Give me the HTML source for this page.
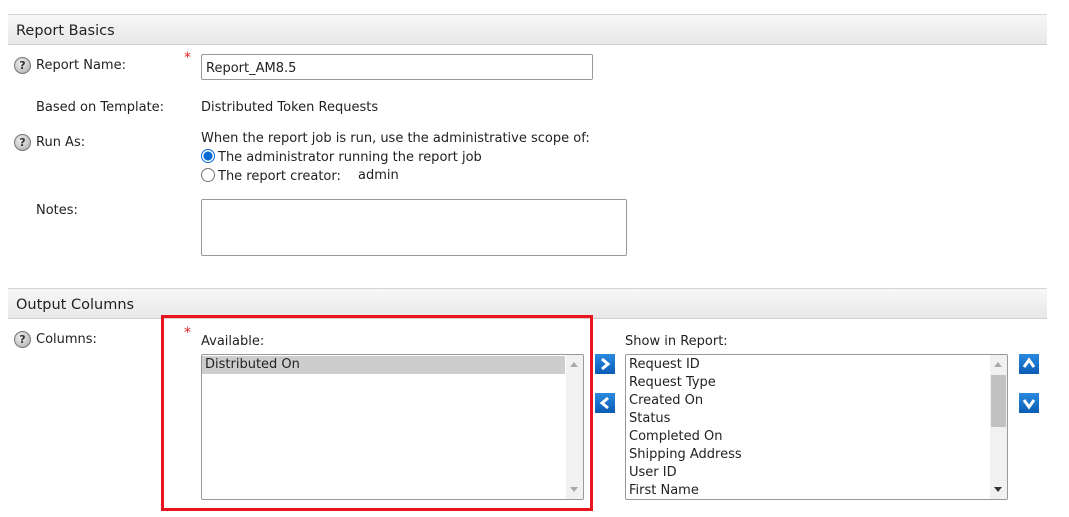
<!DOCTYPE html>
<html><head><style>
*{margin:0;padding:0;box-sizing:border-box}
body{width:1069px;height:517px;background:#fff;font-family:"DejaVu Sans","Liberation Sans",sans-serif;font-size:13px;color:#222;position:relative;overflow:hidden}
.a{position:absolute;white-space:nowrap}
.hdr{position:absolute;left:8px;width:1039px;height:31px;background:linear-gradient(#f7f7f7,#e8e8e8);border-top:1px solid #d4d4d4;border-bottom:1px solid #d0d0d0;font-size:14.5px;padding:8px 0 0 8px;color:#222}
.help{position:absolute;width:17px;height:17px;border-radius:50%;background:radial-gradient(circle at 40% 35%,#f2f2f2,#a8a8a8);border:1px solid #777;font-size:11px;font-weight:bold;text-align:center;line-height:15px;color:#333}
.star{position:absolute;color:#d22;font-size:14px}
.box{position:absolute;border:1px solid #999;background:#fff;border-radius:2px}
.radio{position:absolute;width:14px;height:14px;border-radius:50%;border:1px solid #777;background:#fff}
.btn{position:absolute;width:20px;height:20px;background:linear-gradient(#2a8ae0,#0b5cb5)}
.sb{position:absolute;right:0;top:0;bottom:0;width:17px;background:#f1f1f1}
.li{height:18px;line-height:18px;padding-left:3px;font-size:13px}
.ar{position:absolute;left:4px;width:0;height:0;border-left:4px solid transparent;border-right:4px solid transparent}
</style></head><body>
<div class="hdr" style="top:14px">Report Basics</div>
<div class="help" style="left:14px;top:57px">?</div>
<div class="a" style="left:36px;top:58px">Report Name:</div>
<div class="star" style="left:184px;top:50px">*</div>
<div class="box" style="left:201px;top:54px;width:392px;height:26px;padding:6px 0 0 4px">Report_AM8.5</div>
<div class="a" style="left:36px;top:100px">Based on Template:</div>
<div class="a" style="left:201px;top:100px">Distributed Token Requests</div>
<div class="help" style="left:14px;top:134px">?</div>
<div class="a" style="left:36px;top:135px">Run As:</div>
<div class="a" style="left:201px;top:131px">When the report job is run, use the administrative scope of:</div>
<div class="radio" style="left:201px;top:149px;border-color:#0a6ad6;background:radial-gradient(circle,#0a6ad6 0 4px,#fff 5px)"></div>
<div class="a" style="left:218px;top:150px">The administrator running the report job</div>
<div class="radio" style="left:201px;top:168px"></div>
<div class="a" style="left:218px;top:169px">The report creator:</div>
<div class="a" style="left:358px;top:168px">admin</div>
<div class="a" style="left:36px;top:203px">Notes:</div>
<div class="box" style="left:201px;top:199px;width:426px;height:57px"></div>
<div class="hdr" style="top:288px">Output Columns</div>
<div class="help" style="left:14px;top:331px">?</div>
<div class="a" style="left:36px;top:332px">Columns:</div>
<div class="star" style="left:184px;top:325px">*</div>
<div class="a" style="left:201px;top:334px">Available:</div>
<div class="box" style="left:201px;top:354px;width:383px;height:146px;overflow:hidden"><div class="sb"><div class="ar" style="top:7px;border-bottom:5px solid #aaa"></div><div class="ar" style="bottom:7px;border-top:5px solid #aaa"></div></div><div class="li" style="background:#cdcdcd;margin-right:18px;margin-top:1px">Distributed On</div></div>
<div style="position:absolute;left:161px;top:315px;width:432px;height:196px;border:3px solid #e8141e"></div>
<div class="btn" style="left:595px;top:354px"><svg width="20" height="20"><path d="M7 5 L13 10 L7 15" stroke="#fff" stroke-width="3" fill="none"/></svg></div>
<div class="btn" style="left:595px;top:393px"><svg width="20" height="20"><path d="M13 5 L7 10 L13 15" stroke="#fff" stroke-width="3" fill="none"/></svg></div>
<div class="a" style="left:625px;top:334px">Show in Report:</div>
<div class="box" style="left:625px;top:354px;width:383px;height:146px;overflow:hidden"><div class="sb"><div class="ar" style="top:7px;border-bottom:5px solid #aaa"></div><div style="position:absolute;left:1px;right:1px;top:20px;height:52px;background:#c1c1c1"></div><div class="ar" style="bottom:7px;border-top:5px solid #333"></div></div>
<div style="margin-top:1px"><div class="li">Request ID</div><div class="li">Request Type</div><div class="li">Created On</div><div class="li">Status</div><div class="li">Completed On</div><div class="li">Shipping Address</div><div class="li">User ID</div><div class="li">First Name</div></div></div>
<div class="btn" style="left:1019px;top:354px"><svg width="20" height="20"><path d="M5 13 L10 6 L15 13" stroke="#fff" stroke-width="3" fill="none"/></svg></div>
<div class="btn" style="left:1019px;top:393px"><svg width="20" height="20"><path d="M5 7 L10 14 L15 7" stroke="#fff" stroke-width="3" fill="none"/></svg></div>
</body></html>
